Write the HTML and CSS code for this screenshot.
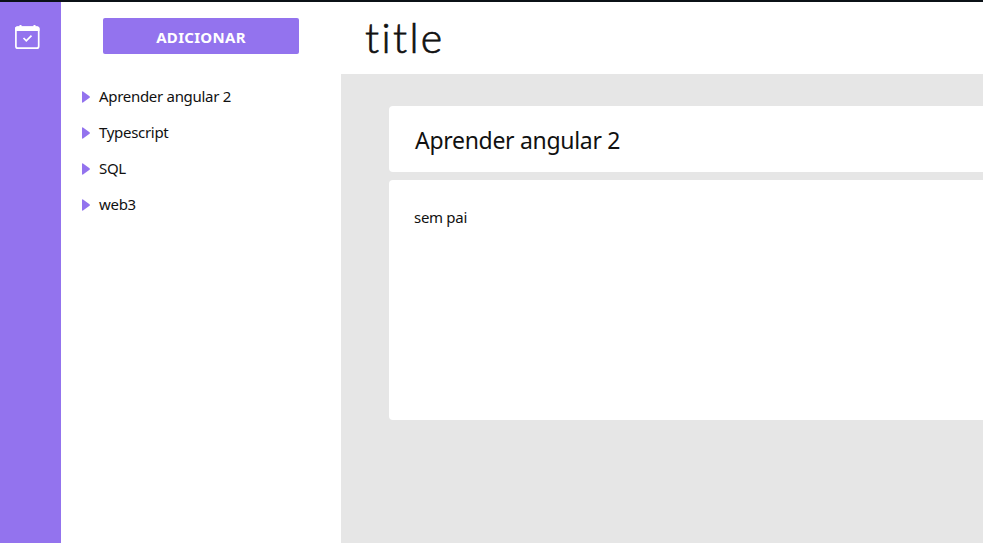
FILE: index.html
```
<!DOCTYPE html>
<html lang="pt-BR">
<head>
<meta charset="utf-8">
<title>title</title>
<link rel="stylesheet" href="styles.css">
</head>
<body>
<div class="app">
  <nav class="rail">
    <svg class="rail-icon" width="26" height="26" viewBox="0 0 26 26" fill="none" stroke="#fff">
      <path d="M5.500 1v3M19.500 1v3" stroke-width="2"/>
      <rect x="0.900" y="3" width="22.800" height="21.200" rx="2" stroke-width="1.700"/>
      <path d="M2 2.500h20.500a2 2 0 0 1 2 2v2.500H0V4.500a2 2 0 0 1 2-2z" fill="#fff" stroke="none"/>
      <path d="M8.500 14l2.800 2.800 5.200-5.200" stroke-width="1.700"/>
    </svg>
  </nav>
  <aside class="sidebar">
    <button class="add">ADICIONAR</button>
    <ul class="tree">
      <li><svg class="arrow" viewBox="0 0 8 12"><path d="M0 1Q0 0 1 .4L7.500 5.200Q8.300 6 7.500 6.800L1 11.600Q0 12 0 11z"/></svg><span>Aprender angular 2</span></li>
      <li><svg class="arrow" viewBox="0 0 8 12"><path d="M0 1Q0 0 1 .4L7.500 5.200Q8.300 6 7.500 6.800L1 11.600Q0 12 0 11z"/></svg><span>Typescript</span></li>
      <li><svg class="arrow" viewBox="0 0 8 12"><path d="M0 1Q0 0 1 .4L7.500 5.200Q8.300 6 7.500 6.800L1 11.600Q0 12 0 11z"/></svg><span>SQL</span></li>
      <li><svg class="arrow" viewBox="0 0 8 12"><path d="M0 1Q0 0 1 .4L7.500 5.200Q8.300 6 7.500 6.800L1 11.600Q0 12 0 11z"/></svg><span>web3</span></li>
    </ul>
  </aside>
  <main class="main">
    <header class="header"><h1>title</h1></header>
    <section class="content">
      <div class="card card-title"><h2>Aprender angular 2</h2></div>
      <div class="card card-body"><p>sem pai</p></div>
    </section>
  </main>
</div>
</body>
</html>
```
FILE: styles.css
```
* { box-sizing: border-box; }
body {
  margin: 0;
  height: 543px;
  overflow: hidden;
  background: #fff;
  color: #111;
  font-family: "Noto Sans", sans-serif;
}
h1, h2, p, ul { margin: 0; padding: 0; font-weight: 400; }
.app {
  display: flex;
  height: 543px;
  border-top: 2px solid #0b1117;
}
.rail {
  width: 61px;
  flex: none;
  padding: 22px 0 0 15px;
  background: #9373ee;
}
.rail-icon { display: block; }
.sidebar { width: 280px; flex: none; padding-top: 16px; }
.add {
  display: block;
  width: 196px;
  height: 36px;
  margin-left: 42px;
  padding: 3px 0 0;
  border: 0;
  border-radius: 2px;
  background: #9373ee;
  color: #fff;
  font: 700 15px/33px "Noto Sans", sans-serif;
  letter-spacing: 0.3px;
}
.tree { margin-top: 25px; list-style: none; }
.tree li {
  display: flex;
  align-items: center;
  height: 36px;
  padding-left: 21px;
  font-size: 15px;
  letter-spacing: -0.3px;
}
.tree span { margin-top: -2px; }
.arrow { width: 8px; height: 12px; margin-right: 9px; fill: #9373ee; }
.main { flex: 1; min-width: 0; display: flex; flex-direction: column; }
.header { height: 72px; flex: none; padding: 6px 0 0 24px; }
h1 {
  font: 300 41px/60px Lato, sans-serif;
  letter-spacing: 2.4px;
  -webkit-text-stroke: 0.7px #111;
}
.content { flex: 1; padding: 32px 0 0 48px; background: #e6e6e6; }
.card { background: #fff; border-radius: 4px 0 0 4px; }
.card-title { height: 66px; padding: 18px 26px; }
h2 { font-size: 23px; line-height: 32px; letter-spacing: -0.3px; }
.card-body { height: 240px; margin-top: 8px; padding: 26px 25px; }
.card-body p { font-size: 15px; line-height: 22px; letter-spacing: -0.3px; }
```
